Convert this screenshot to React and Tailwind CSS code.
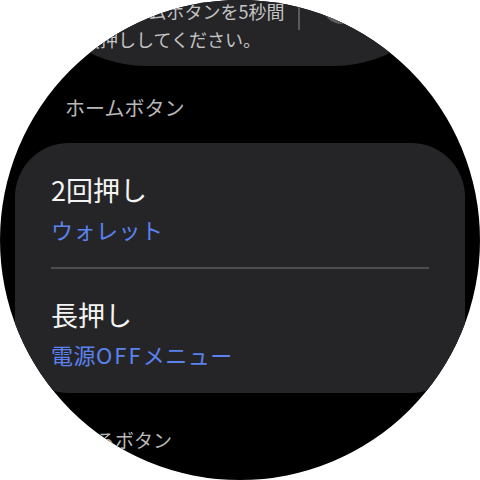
import React from 'react';

const font = { fontFamily: '"Noto Sans CJK JP", "Noto Sans", sans-serif' };

function SettingRow({ title, value, className }) {
  return (
    <div className={className}>
      <div className="text-[27px] leading-[34px] text-[#f4f4f4]">{title}</div>
      <div className="text-[22px] leading-[30px] tracking-[0.5px] text-[#5b82f0] mt-[7px]">{value}</div>
    </div>
  );
}

export default function App() {
  return (
    <div className="w-[480px] h-[480px] bg-white" style={font}>
      <div className="w-[480px] h-[480px] rounded-full overflow-hidden bg-black">
        {/* list, scrolled part way down */}
        <div className="flex flex-col">
          {/* card above, cut off at the top */}
          <div className="mx-[15px] -mt-[100px] h-[166px] rounded-b-[132px] bg-[#252527] flex">
            <div className="flex-1 flex flex-col justify-end pb-[13px] pl-[67px] text-[18px] leading-[28px] text-[#c4c4c4]">
              <div className="ml-[31px] whitespace-nowrap">ホームボタンを5秒間</div>
              <div className="whitespace-nowrap">長押ししてください。</div>
            </div>
            <div className="w-[2px] h-[60px] mt-[70px] bg-[#5a5a5c]"></div>
            <div className="w-[165px] pl-[22px] pt-[84px]">
              <div className="w-[110px] h-[40px] rounded-full bg-[#5d5d61]"></div>
            </div>
          </div>

          <div className="pt-[28px] pb-[21px] pl-[65px] text-[20px] leading-[28px] text-[#b8b8b8]">
            ホームボタン
          </div>

          <div className="mx-[15px] rounded-[54px] bg-[#252527] flex flex-col">
            <SettingRow className="px-[36px] pt-[30px] pb-[23px]" title="2回押し" value="ウォレット" />
            <div className="mx-[36px] h-[2px] bg-[#4e4e50]"></div>
            <SettingRow
              className="px-[36px] pt-[29px] pb-[24px]"
              title="長押し"
              value={<>電源<span className="tracking-[2px]">OFF</span>メニュー</>}
            />
          </div>

          <div className="mt-[34px] pl-[77px] text-[19px] leading-[26px] text-[#b8b8b8]">
            戻るボタン
          </div>
        </div>
      </div>
    </div>
  );
}
